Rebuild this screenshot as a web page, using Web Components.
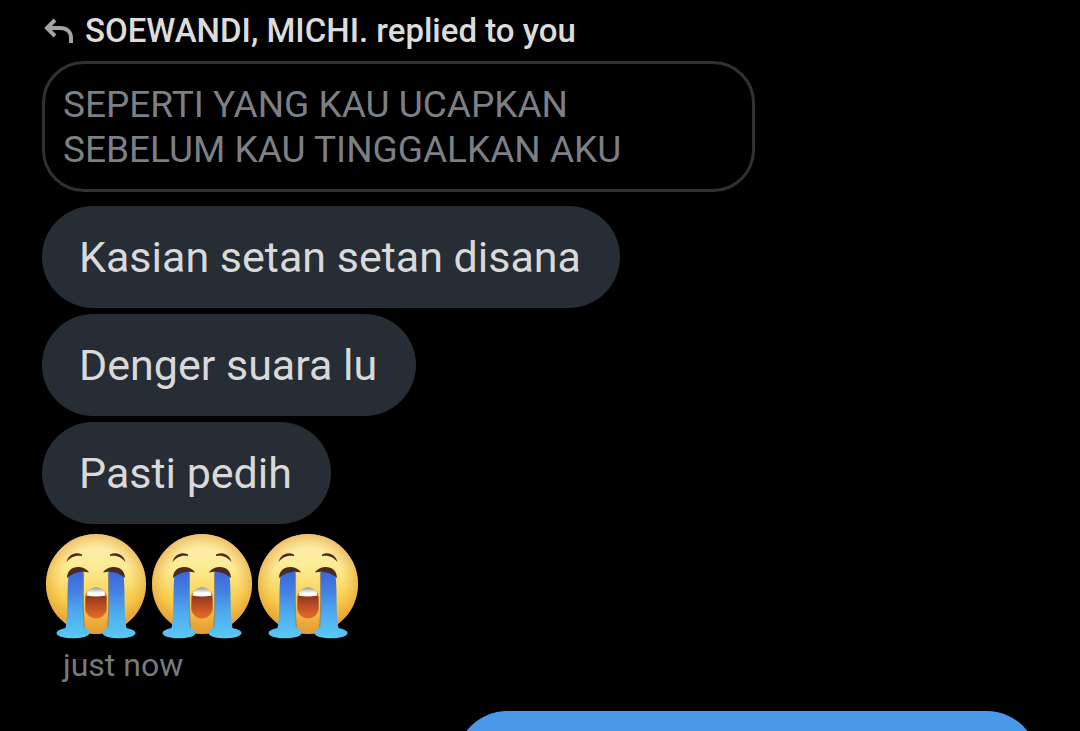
<!DOCTYPE html>
<html lang="id">
<head>
<meta charset="utf-8">
<meta name="viewport" content="width=device-width, initial-scale=1">
<title>Messages</title>
<style>
  html, body { margin: 0; height: 100%; background: #000; }
</style>
</head>
<body>
<chat-thread>
  <reply-header>SOEWANDI, MICHI. replied to you</reply-header>
  <quoted-message>SEPERTI YANG KAU UCAPKAN SEBELUM KAU TINGGALKAN AKU</quoted-message>
  <message-group>
    <chat-bubble>Kasian setan setan disana</chat-bubble>
    <chat-bubble>Denger suara lu</chat-bubble>
    <chat-bubble>Pasti pedih</chat-bubble>
  </message-group>
  <emoji-row><crying-face></crying-face><crying-face></crying-face><crying-face></crying-face></emoji-row>
  <time-stamp>just now</time-stamp>
  <chat-bubble own></chat-bubble>
</chat-thread>
<script>
function define(name, html) {
  const template = document.createElement('template');
  template.innerHTML = html;
  customElements.define(name, class extends HTMLElement {
    constructor() {
      super();
      this.attachShadow({ mode: 'open' }).append(template.content.cloneNode(true));
    }
  });
}

define('chat-thread', `
  <style>
    :host { display: block; height: 100%; overflow: hidden; background: #000; color: #d9d9d9; font-family: Roboto, sans-serif; }
    main { display: flex; flex-direction: column; align-items: flex-start; padding: 0 42px; }
  </style>
  <main><slot></slot></main>`);

define('reply-header', `
  <style>
    :host { display: block; }
    header { display: flex; align-items: center; gap: 12px; height: 61px; font-weight: 500; font-size: 33px; line-height: 40px; color: #dcdcdc; white-space: nowrap; }
    svg { width: 31px; height: 26px; flex: none; }
  </style>
  <header>
    <svg viewBox="0 0 31 26" fill="none" stroke="#a3a3a3" stroke-width="4" aria-hidden="true">
      <path d="M13 2 5 10l8 8M5 10h13c7 0 11 4 11 10v5"/>
    </svg>
    <span><slot></slot></span>
  </header>`);

define('quoted-message', `
  <style>
    :host { display: block; width: 100%; max-width: 713px; }
    blockquote { box-sizing: border-box; margin: 0; padding: 18px 100px 17px 18px; border: 3px solid #2f3133; border-radius: 42px; color: #7c7f84; font-size: 37px; line-height: 45px; }
  </style>
  <blockquote><slot></slot></blockquote>`);

define('message-group', `
  <style>
    :host { display: flex; flex-direction: column; align-items: flex-start; gap: 6px; margin-top: 14px; }
  </style>
  <slot></slot>`);

define('chat-bubble', `
  <style>
    :host { display: block; box-sizing: border-box; min-height: 102px; padding: 24px 39px 24px 37px; border-radius: 51px; background: #262d34; font-size: 43px; line-height: 54px; }
    :host([own]) { align-self: flex-end; width: 100%; max-width: 582px; margin-top: 26px; background: #4a99e9; }
  </style>
  <slot></slot>`);

define('emoji-row', `
  <style>
    :host { display: flex; gap: 6px; margin: 10px 0 0 4px; }
  </style>
  <slot></slot>`);

define('crying-face', `
  <style>
    :host { display: block; width: 100px; height: 105px; }
    svg { display: block; width: 100%; height: 100%; }
  </style>
  <svg viewBox="0 0 100 105" role="img" aria-label="Loudly crying face">
    <defs>
      <linearGradient id="skin" x1="0" y1="0" x2="0" y2="1">
        <stop offset="0" stop-color="#fdf0b4"/><stop offset=".35" stop-color="#fdeb92"/>
        <stop offset=".65" stop-color="#f9cf4e"/><stop offset="1" stop-color="#ea9a34"/>
      </linearGradient>
      <radialGradient id="rim" cx="50%" cy="50%" r="50%">
        <stop offset=".7" stop-color="#e8a834" stop-opacity="0"/><stop offset="1" stop-color="#e09a30" stop-opacity=".55"/>
      </radialGradient>
      <linearGradient id="tear" x1="0" y1="37" x2="0" y2="104" gradientUnits="userSpaceOnUse">
        <stop offset="0" stop-color="#3c64d8"/><stop offset=".3" stop-color="#4380e3"/>
        <stop offset=".62" stop-color="#4fabee"/><stop offset="1" stop-color="#5ac8f4"/>
      </linearGradient>
      <linearGradient id="mouth" x1="0" y1="0" x2="0" y2="1">
        <stop offset=".2" stop-color="#87301c"/><stop offset=".9" stop-color="#e06428"/>
      </linearGradient>
      <linearGradient id="teeth" x1="0" y1="0" x2="0" y2="1">
        <stop offset="0" stop-color="#98958e"/><stop offset=".6" stop-color="#fff"/>
      </linearGradient>
      <g id="half">
        <path d="M20.500 28C22 21 29 17 36 20.500l0 1.500C29 21 25 23 20.500 28z" fill="#492b1c"/>
        <path d="M22.500 41c4-5 11-6 15-3 0 18-1 40 1 56q5 2 5 5c0 7-33 7-33 0q0-3 9-5c3-14 1-34 3-53z" fill="url(#tear)"/>
        <path d="M37.500 39c0 18-1 38 1 55" fill="none" stroke="#857e63" stroke-width="1.200" opacity=".7"/>
        <path d="M21 44C21 36 27 32.500 33 33q7 .5 10 5.500C35 36.500 28 38 21 44z" fill="#4a2b20"/>
      </g>
    </defs>
    <circle cx="50" cy="50" r="50" fill="url(#skin)"/>
    <circle cx="50" cy="50" r="50" fill="url(#rim)"/>
    <use href="#half"/>
    <use href="#half" transform="translate(100 0) scale(-1 1)"/>
    <path d="M39.500 64a10.500 10 0 0 1 21 0v10a10.500 10 0 0 1-21 0z" fill="url(#mouth)" stroke="#bd762b" stroke-width="1"/>
    <path d="M40.500 61.500a9.500 8 0 0 1 19 0q-9.500 2-19 0z" fill="url(#teeth)"/>
  </svg>`);

define('time-stamp', `
  <style>
    :host { display: block; margin: 6px 0 0 21px; color: #777a7d; font-size: 32px; line-height: 40px; }
  </style>
  <time><slot></slot></time>`);
</script>
</body>
</html>
